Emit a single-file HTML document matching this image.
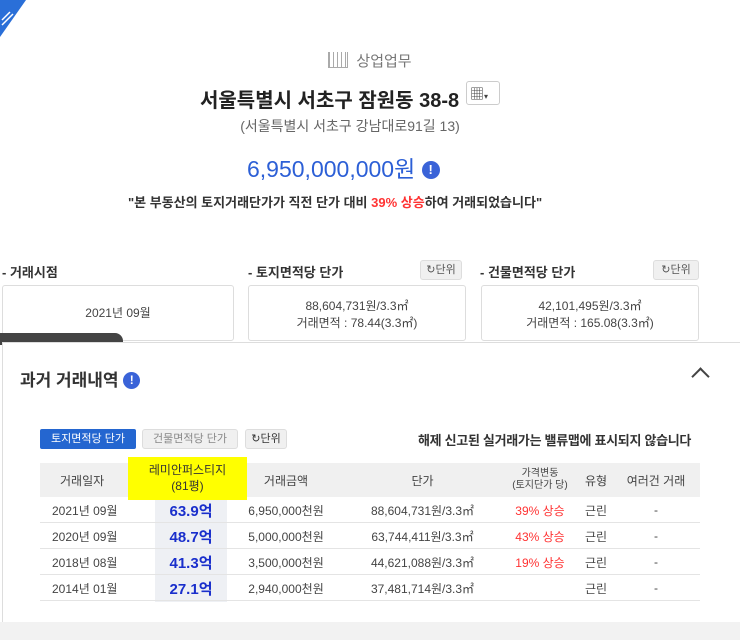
<!DOCTYPE html>
<html><head><meta charset="utf-8"><style>
*{margin:0;padding:0;box-sizing:border-box}
body{width:740px;height:640px;overflow:hidden;background:#fff;font-family:"Liberation Sans","Noto Sans CJK KR",sans-serif;color:#333;position:relative}
.a{position:absolute}
.c{text-align:center}
.box{position:absolute;border:1px solid #ddd;border-radius:3px;background:#fff;text-align:center;font-size:12px;color:#444}
.btn{position:absolute;background:#f0f0f0;border:1px solid #ddd;border-radius:3px;font-size:11px;color:#555;text-align:center}
table{border-collapse:collapse;font-size:12px;color:#444;table-layout:fixed}
td,th{text-align:center;font-weight:normal;white-space:nowrap}
</style></head><body>
<svg class="a" style="left:0;top:0" width="30" height="40"><polygon points="0,0 26,0 0,37" fill="#2a6fd8"/><path d="M2 20 L10 12 M2 25 L13 14" stroke="#fff" stroke-width="1.5"/></svg>
<div class="a c" style="left:0;width:740px;top:50px;font-size:15px;color:#777"><span style="display:inline-block;width:20px;height:16px;border:1px solid #aaa;border-top:none;vertical-align:-2px;margin-right:8px;background:repeating-linear-gradient(90deg,#aaa 0 1px,transparent 1px 4px)"></span>상업업무</div>
<div class="a" style="left:200px;top:84px;font-size:20px;color:#222;font-weight:bold">서울특별시 서초구 잠원동 38-8</div>
<div class="a" style="left:466px;top:81px;width:34px;height:24px;border:1px solid #ccc;border-radius:3px;font-size:14px;padding:2px 3px;color:#444">▦<span style="font-size:8px">▾</span></div>
<div class="a c" style="left:0;width:700px;top:116px;font-size:14px;color:#666">(서울특별시 서초구 강남대로91길 13)</div>
<div class="a" style="left:247px;top:150px;font-size:23px;color:#2c5fd6">6,950,000,000원 <span style="display:inline-block;width:18px;height:18px;border-radius:50%;background:#3a63d8;color:#fff;font-size:13px;text-align:center;line-height:18px;font-weight:bold;vertical-align:3px">!</span></div>
<div class="a" style="left:128px;top:192px;font-size:13px;font-weight:bold;color:#333">"본 부동산의 토지거래단가가 직전 단가 대비 <span style="color:#f33">39% 상승</span>하여 거래되었습니다"</div>

<div class="a" style="left:2px;top:262px;font-size:13px;font-weight:bold;color:#333">- 거래시점</div>
<div class="a" style="left:248px;top:262px;font-size:13px;font-weight:bold;color:#333">- 토지면적당 단가</div>
<div class="a" style="left:480px;top:262px;font-size:13px;font-weight:bold;color:#333">- 건물면적당 단가</div>
<div class="btn" style="left:420px;top:260px;width:42px;height:20px;line-height:18px">↻단위</div>
<div class="btn" style="left:653px;top:260px;width:46px;height:20px;line-height:18px">↻단위</div>
<div class="box" style="left:2px;top:285px;width:232px;height:56px;line-height:54px">2021년 09월</div>
<div class="box" style="left:248px;top:285px;width:218px;height:56px;padding-top:12px;line-height:17px">88,604,731원/3.3㎡<br>거래면적 : 78.44(3.3㎡)</div>
<div class="box" style="left:481px;top:285px;width:218px;height:56px;padding-top:12px;line-height:17px">42,101,495원/3.3㎡<br>거래면적 : 165.08(3.3㎡)</div>

<div class="a" style="left:0;top:333px;width:123px;height:12px;background:#444;border-radius:0 8px 0 0"></div>
<div class="a" style="left:2px;top:342px;width:738px;height:280px;border-top:1px solid #ddd;border-left:1px solid #ddd;background:#fff"></div>
<div class="a" style="left:20px;top:366px;font-size:17px;font-weight:bold;color:#333">과거 거래내역 <span style="display:inline-block;width:17px;height:17px;border-radius:50%;background:#3a63d8;color:#fff;font-size:12px;text-align:center;line-height:17px;vertical-align:2px">!</span></div>
<div class="a" style="left:694px;top:370px;width:13px;height:13px;border-left:2px solid #444;border-top:2px solid #444;transform:rotate(45deg)"></div>
<div class="a" style="left:40px;top:429px;width:96px;height:20px;background:#2466d0;border-radius:2px;color:#fff;font-size:11px;text-align:center;line-height:20px">토지면적당 단가</div>
<div class="btn" style="left:142px;top:429px;width:96px;height:20px;line-height:18px;color:#888">건물면적당 단가</div>
<div class="btn" style="left:245px;top:429px;width:42px;height:20px;line-height:18px;color:#333">↻단위</div>
<div class="a" style="left:418px;top:430px;font-size:13px;font-weight:bold;color:#333;letter-spacing:-0.3px">해제 신고된 실거래가는 밸류맵에 표시되지 않습니다</div>

<div class="a" style="left:40px;top:463px;width:660px;height:34px;background:#f0f0f0"></div>
<div class="a" style="left:155px;top:497px;width:72px;height:105px;background:#eef0f4"></div>
<div class="a" style="left:40px;top:497px;width:660px;height:104px">
<div style="height:26px;border-bottom:1px solid #e4e4e4"></div><div style="height:26px;border-bottom:1px solid #e4e4e4"></div><div style="height:26px;border-bottom:1px solid #e4e4e4"></div><div style="height:26px;border-bottom:1px solid #e4e4e4"></div></div>
<div class="a" style="left:128px;top:457px;width:119px;height:43px;background:#ffff00;text-align:center;font-size:12px;color:#333;line-height:16px;padding-top:5px">레미안퍼스티지<br>(81평)</div>
<div class="a" style="left:40px;top:463px;width:660px">
<table style="width:660px">
<colgroup><col style="width:115px"><col style="width:72px"><col style="width:118px"><col style="width:155px"><col style="width:80px"><col style="width:32px"><col style="width:88px"></colgroup>
<tr style="height:34px"><td style="text-align:left;padding-left:20px">거래일자</td><td></td><td>거래금액</td><td>단가</td><td style="font-size:10px;line-height:12px">가격변동<br>(토지단가 당)</td><td>유형</td><td>여러건 거래</td></tr>
<tr style="height:26px"><td style="text-align:left;padding-left:12px">2021년 09월</td><td style="color:#1a2fcc;font-size:15px;font-weight:bold">63.9억</td><td>6,950,000천원</td><td>88,604,731원/3.3㎡</td><td style="color:#f33">39% 상승</td><td>근린</td><td>-</td></tr>
<tr style="height:26px"><td style="text-align:left;padding-left:12px">2020년 09월</td><td style="color:#1a2fcc;font-size:15px;font-weight:bold">48.7억</td><td>5,000,000천원</td><td>63,744,411원/3.3㎡</td><td style="color:#f33">43% 상승</td><td>근린</td><td>-</td></tr>
<tr style="height:26px"><td style="text-align:left;padding-left:12px">2018년 08월</td><td style="color:#1a2fcc;font-size:15px;font-weight:bold">41.3억</td><td>3,500,000천원</td><td>44,621,088원/3.3㎡</td><td style="color:#f33">19% 상승</td><td>근린</td><td>-</td></tr>
<tr style="height:26px"><td style="text-align:left;padding-left:12px">2014년 01월</td><td style="color:#1a2fcc;font-size:15px;font-weight:bold">27.1억</td><td>2,940,000천원</td><td>37,481,714원/3.3㎡</td><td></td><td>근린</td><td>-</td></tr>
</table></div>
<div class="a" style="left:0;top:622px;width:740px;height:18px;background:#f2f2f2"></div>
</body></html>
